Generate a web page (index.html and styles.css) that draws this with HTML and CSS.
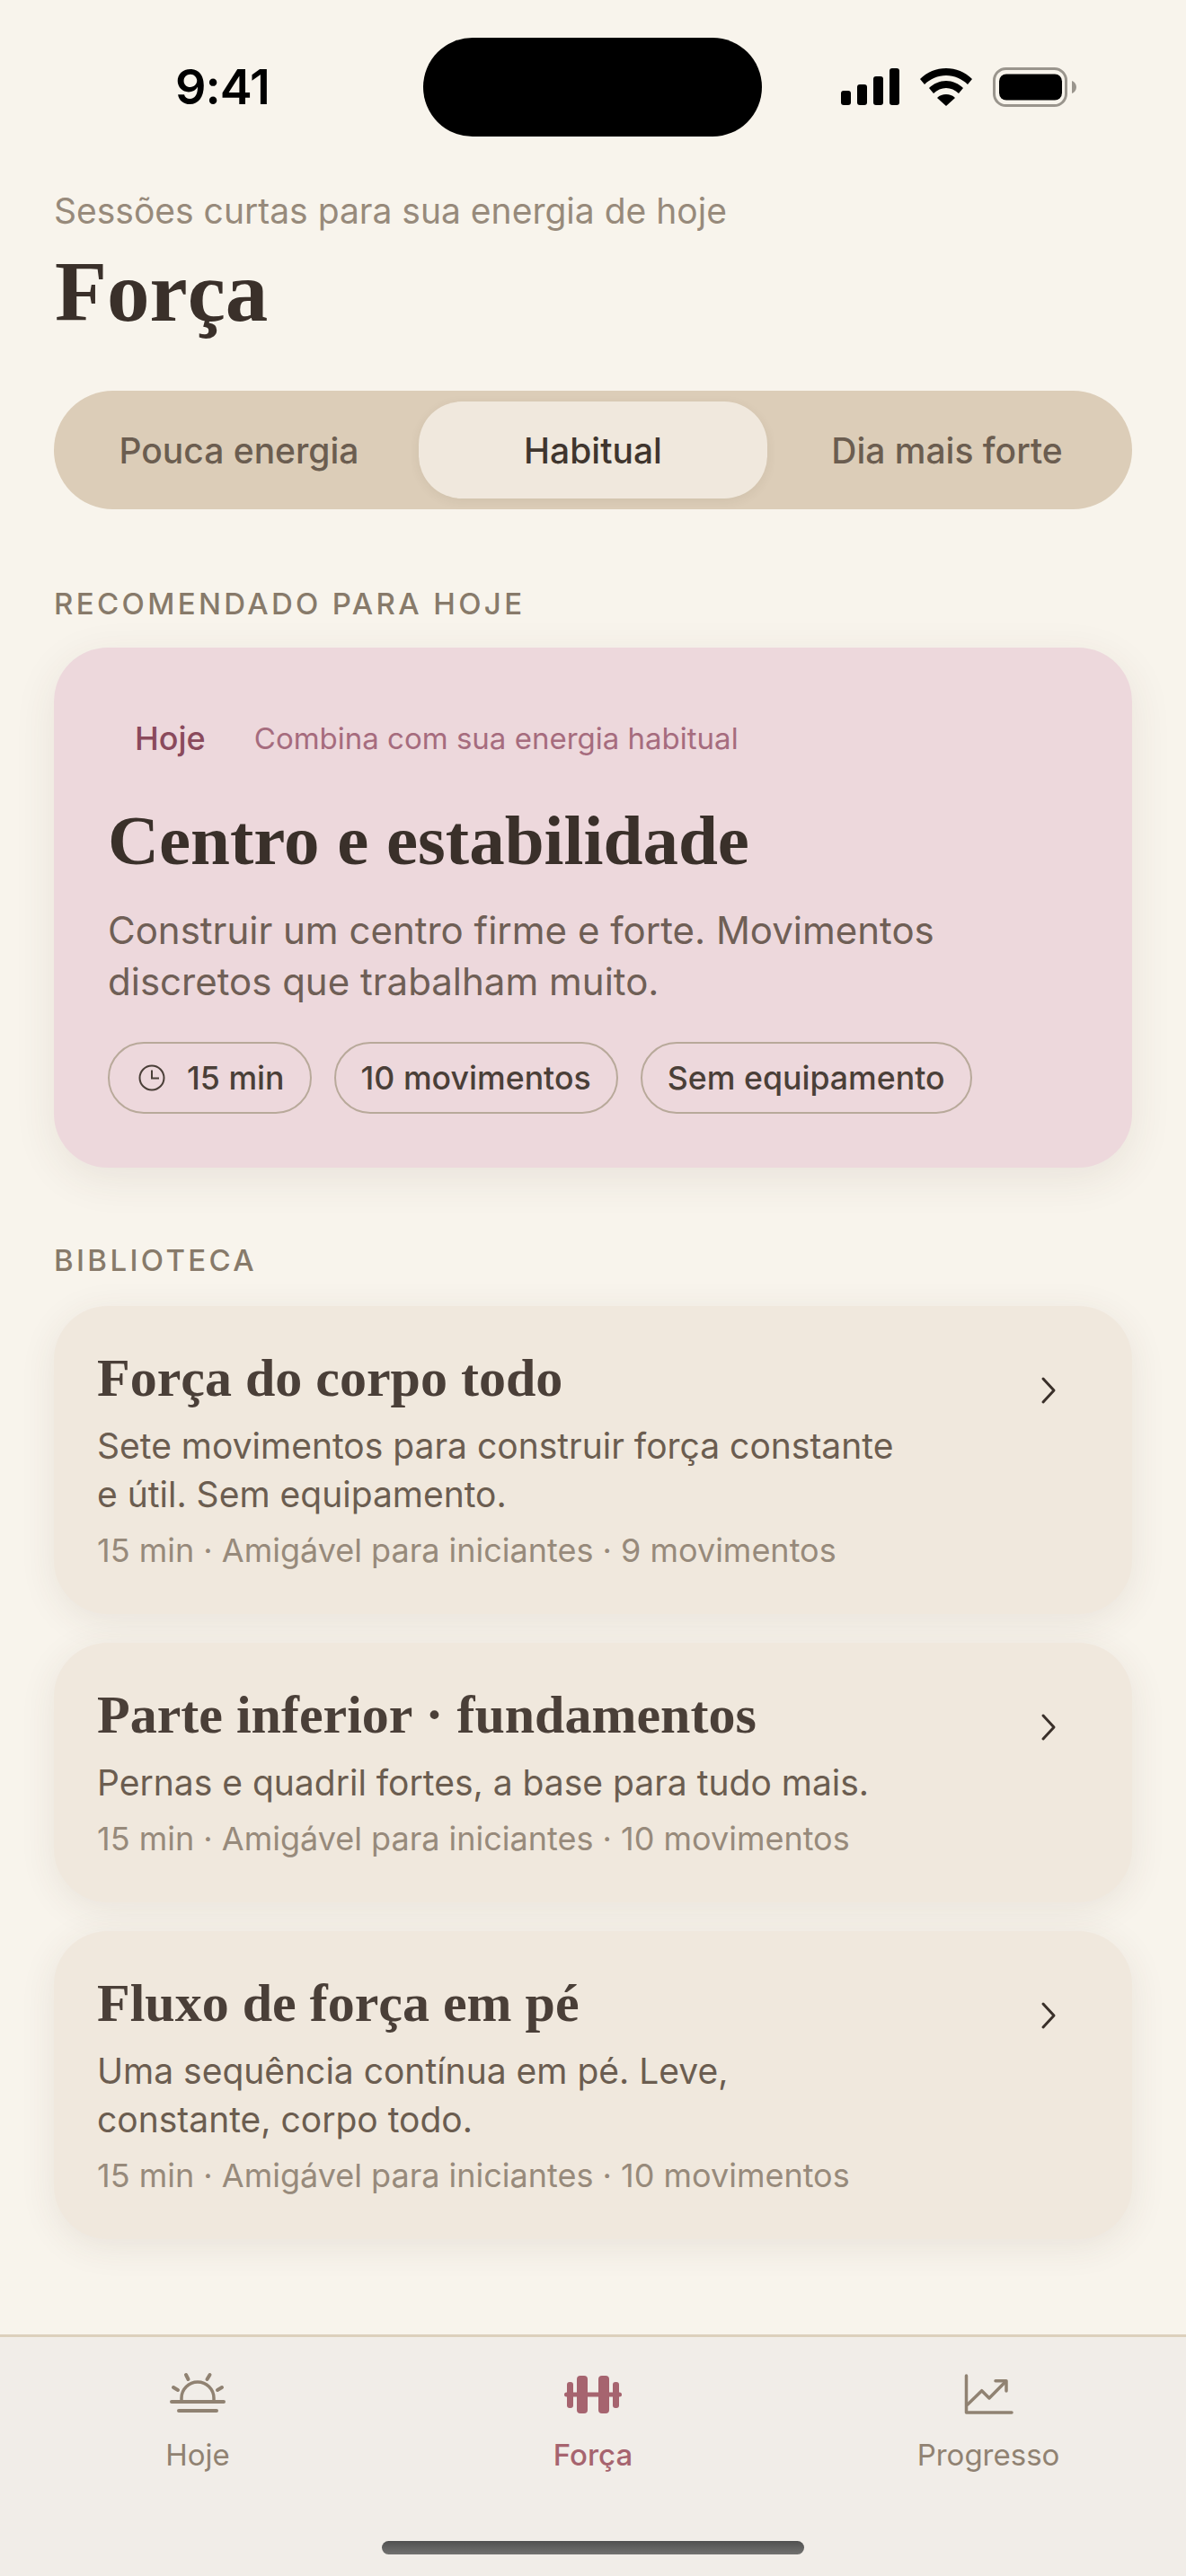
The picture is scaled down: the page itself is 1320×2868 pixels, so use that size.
FILE: index.html
```html
<!DOCTYPE html>
<html lang="pt-BR">
<head>
  <meta charset="UTF-8">
  <title>Força</title>
  <link rel="stylesheet" href="styles.css">
</head>
<body>
  <div class="phone">
    <div class="status">
      <span class="time">9:41</span>
      <div class="island"></div>
      <div class="status-icons">
        <svg width="66" height="42" viewBox="0 0 66 42"><rect x="1" y="25" width="11" height="16" rx="3"/><rect x="19" y="18" width="11" height="23" rx="3"/><rect x="37" y="9" width="11" height="32" rx="3"/><rect x="55" y="0" width="11" height="41" rx="3"/></svg>
        <svg width="58" height="42" viewBox="0 0 58 42"><path d="M29 0C18 0 8 4 0 12l5 6c6-6 15-10 24-10s18 4 24 10l5-6C50 4 40 0 29 0z"/><path d="M29 14c-7 0-14 3-19 8l5 6c4-4 9-6 14-6s10 2 14 6l5-6c-5-5-12-8-19-8z"/><path d="M29 29c-4 0-7 1-10 4l10 9 10-9c-3-3-6-4-10-4z"/></svg>
        <svg width="93" height="44" viewBox="0 0 93 44"><rect x="1.5" y="1.5" width="80" height="41" rx="13" fill="none" stroke="#9a958d" stroke-width="3"/><rect x="7" y="7.5" width="70" height="29" rx="8"/><path d="M88 15c3 1 5 4 5 7s-2 6-5 7z" fill="#9a958d"/></svg>
      </div>
    </div>

    <header class="page-head">
      <p class="lead">Sessões curtas para sua energia de hoje</p>
      <h1>Força</h1>
    </header>

    <div class="segments">
      <div class="segment">Pouca energia</div>
      <div class="segment active">Habitual</div>
      <div class="segment">Dia mais forte</div>
    </div>

    <h2 class="section-label">RECOMENDADO PARA HOJE</h2>
    <section class="feature">
      <div class="feature-tags">
        <span class="tag-today">Hoje</span>
        <span class="tag-match">Combina com sua energia habitual</span>
      </div>
      <h3>Centro e estabilidade</h3>
      <p class="feature-text">Construir um centro firme e forte. Movimentos discretos que trabalham muito.</p>
      <div class="chips">
        <span class="chip chip-time">
          <svg width="30" height="30" viewBox="0 0 30 30" fill="none" stroke="#4a3f38" stroke-width="2"><circle cx="15" cy="15" r="13.5"/><path d="M15 6.5v9h8"/></svg>
          15 min
        </span>
        <span class="chip">10 movimentos</span>
        <span class="chip">Sem equipamento</span>
      </div>
    </section>

    <h2 class="section-label library-label">BIBLIOTECA</h2>
    <div class="library">
      <a class="card">
        <div class="card-body">
          <h4>Força do corpo todo</h4>
          <p class="card-text">Sete movimentos para construir força constante e útil. Sem equipamento.</p>
          <p class="card-meta">15 min · Amigável para iniciantes · 9 movimentos</p>
        </div>
        <svg class="chevron" width="18" height="32" viewBox="0 0 18 32" fill="none" stroke="#3a302a" stroke-width="3" stroke-linecap="round" stroke-linejoin="round"><path d="M3 3l12 13L3 29"/></svg>
      </a>
      <a class="card">
        <div class="card-body">
          <h4>Parte inferior · fundamentos</h4>
          <p class="card-text">Pernas e quadril fortes, a base para tudo mais.</p>
          <p class="card-meta">15 min · Amigável para iniciantes · 10 movimentos</p>
        </div>
        <svg class="chevron" width="18" height="32" viewBox="0 0 18 32" fill="none" stroke="#3a302a" stroke-width="3" stroke-linecap="round" stroke-linejoin="round"><path d="M3 3l12 13L3 29"/></svg>
      </a>
      <a class="card">
        <div class="card-body">
          <h4>Fluxo de força em pé</h4>
          <p class="card-text">Uma sequência contínua em pé. Leve, constante, corpo todo.</p>
          <p class="card-meta">15 min · Amigável para iniciantes · 10 movimentos</p>
        </div>
        <svg class="chevron" width="18" height="32" viewBox="0 0 18 32" fill="none" stroke="#3a302a" stroke-width="3" stroke-linecap="round" stroke-linejoin="round"><path d="M3 3l12 13L3 29"/></svg>
      </a>
    </div>

    <nav class="tabbar">
      <div class="tab">
        <svg width="66" height="50" viewBox="0 0 66 50" fill="none" stroke="currentColor" stroke-width="4" stroke-linecap="round"><path d="M4 34h58M12 44h42"/><path d="M15 33v-3a18 18 0 0 1 36 0v3" stroke-width="3.5"/><path d="M20 4l2.5 5M46.5 4l-3 5M6 18l5 3M60 18l-5 3"/></svg>
        <span>Hoje</span>
      </div>
      <div class="tab active">
        <svg width="66" height="50" viewBox="0 0 66 50" fill="currentColor"><rect x="1" y="23.5" width="64" height="5" rx="2.5"/><rect x="4" y="12" width="7" height="29" rx="3"/><rect x="55" y="12" width="7" height="29" rx="3"/><rect x="15" y="5" width="12" height="42" rx="4"/><rect x="39" y="5" width="12" height="42" rx="4"/></svg>
        <span>Força</span>
      </div>
      <div class="tab">
        <svg width="56" height="50" viewBox="0 0 56 50" fill="none" stroke="currentColor" stroke-width="3.5" stroke-linecap="round" stroke-linejoin="round"><path d="M3.5 5v41H54"/><path d="M5 37l15.7-15.3L29 30l18-18.3"/><path d="M36 10.7h12V22"/></svg>
        <span>Progresso</span>
      </div>
      <div class="home-bar"></div>
    </nav>
  </div>
</body>
</html>
```

FILE: styles.css
```css
* {
  box-sizing: border-box;
}
html, body {
  margin: 0;
  padding: 0;
}
body {
  font-family: Inter, "Noto Sans", sans-serif;
  background-color: #f8f4ec;
  color: #3a302a;
}
.phone {
  width: 1320px;
  height: 2868px;
  position: relative;
  overflow: hidden;
  padding: 0 60px;
}

/* status bar */
.status {
  height: 207px;
  padding: 42px 122px 0 195px;
  margin: 0 -60px;
  display: flex;
  align-items: flex-start;
}
.time {
  font-size: 54px;
  font-weight: 600;
  line-height: 110px;
  letter-spacing: -1px;
  color: #000;
  width: 276px;
}
.island {
  width: 377px;
  height: 110px;
  background: #000;
  border-radius: 55px;
}
.status-icons {
  display: flex;
  align-items: center;
  gap: 23px;
  height: 110px;
  margin-left: auto;
}

.lead {
  margin: 0;
  font-size: 39px;
  line-height: 56px;
  color: #978a7b;
}
h1 {
  margin: 6px 0 0 1px;
  font-family: "Liberation Serif", serif;
  font-size: 95px;
  line-height: 112px;
  font-weight: 700;
  color: #3a302a;
}

/* energy switch */
.segments {
  margin-top: 54px;
  height: 132px;
  padding: 12px;
  background: #dccdb8;
  border-radius: 66px;
  display: grid;
  grid-template-columns: 1fr 1fr 1fr;
  gap: 6px;
}
.segment {
  display: flex;
  align-items: center;
  justify-content: center;
  font-size: 39px;
  font-weight: 500;
  color: #6b5d50;
  border-radius: 48px;
}
.segment.active {
  background: #f0e8dd;
  color: #3f352e;
  box-shadow: 0 3px 12px rgba(80, 60, 40, 0.08);
}

.section-label {
  margin: 84px 0 0;
  font-size: 33px;
  line-height: 42px;
  font-weight: 500;
  letter-spacing: 3.35px;
  color: #877a6a;
}
.library-label {
  margin-top: 82px;
}

/* recommended card */
.feature {
  margin-top: 28px;
  height: 579px;
  padding: 80px 60px 0;
  background: #edd8dc;
  border-radius: 60px;
  box-shadow: 0 12px 48px rgba(80, 60, 40, 0.09);
}
.feature-tags {
  display: flex;
  align-items: center;
  gap: 54px;
  padding-left: 30px;
  height: 42px;
}
.tag-today {
  font-size: 36px;
  font-weight: 500;
  color: #8a4a5c;
}
.tag-match {
  font-size: 33px;
  color: #a66c7e;
}
.feature h3 {
  margin: 48px 0 0;
  font-family: "Liberation Serif", serif;
  font-size: 79px;
  line-height: 90px;
  font-weight: 700;
  color: #3a302a;
}
.feature-text {
  margin: 26px 0 0;
  font-size: 42px;
  line-height: 57px;
  color: #6f5f56;
  width: 1000px;
}
.chips {
  margin-top: 39px;
  display: flex;
  gap: 25px;
}
.chip {
  height: 80px;
  padding: 0 28px;
  border: 2px solid #b8a99a;
  border-radius: 40px;
  display: flex;
  align-items: center;
  gap: 24px;
  font-size: 35.7px;
  font-weight: 500;
  color: #4a3f38;
}
.chip-time {
  padding: 0 28px 0 32px;
}

/* library */
.library {
  margin-top: 30px;
  display: flex;
  flex-direction: column;
  gap: 32px;
}
.card {
  display: flex;
  justify-content: space-between;
  padding: 48px 84px 47px 48px;
  background: #f0e8dd;
  border-radius: 60px;
  box-shadow: 0 8px 40px rgba(80, 60, 40, 0.09);
}
.card-body {
  width: 900px;
}
.card h4 {
  margin: 0;
  font-family: "Liberation Serif", serif;
  font-size: 60px;
  line-height: 64px;
  font-weight: 700;
  color: #4a3f38;
}
.card-text {
  margin: 17px 0 0;
  font-size: 39px;
  line-height: 54px;
  color: #6b5d50;
}
.card-meta {
  margin: 11px 0 0;
  font-size: 36px;
  line-height: 48px;
  color: #978a7b;
}
.chevron {
  margin-top: 30px;
}

/* tab bar */
.tabbar {
  position: absolute;
  left: 0;
  right: 0;
  bottom: 0;
  height: 269px;
  border-top: 3px solid #dcd0bc;
  background: #f1ede8;
  display: grid;
  grid-template-columns: repeat(3, 440px);
  align-items: start;
  padding-top: 38px;
}
.tab {
  display: flex;
  flex-direction: column;
  align-items: center;
  gap: 21px;
  color: #908272;
  font-size: 33px;
  line-height: 44px;
}
.tab.active {
  color: #a6646f;
  font-weight: 500;
}
.home-bar {
  position: absolute;
  left: 425px;
  bottom: 24px;
  width: 470px;
  height: 15px;
  border-radius: 8px;
  background: linear-gradient(#505050, #727270);
}
```
